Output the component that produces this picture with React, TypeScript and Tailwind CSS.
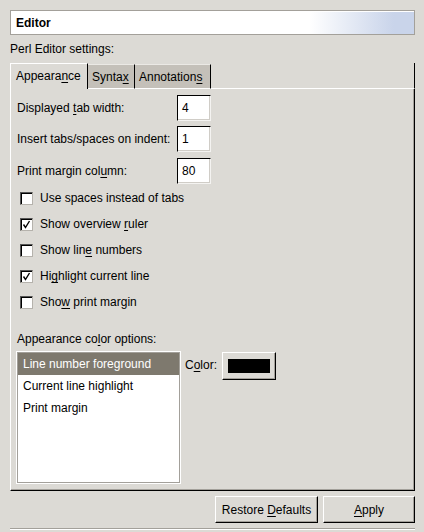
import React from "react";

const U = ({ c }: { c: string }) => <span className="underline underline-offset-2">{c}</span>;

function Check({ checked }: { checked: boolean }) {
  return (
    <div className="w-[13px] h-[13px] bg-white border border-t-[#555] border-l-[#555] border-b-[#b5b2ac] border-r-[#b5b2ac] shadow-[inset_1px_1px_0_#000] flex items-center justify-center shrink-0">
      {checked && (
        <svg width="11" height="11" viewBox="0 0 11 11">
          <path d="M2.5 5.5 L4.5 8.5 L8.5 2" stroke="#000" strokeWidth="1.4" fill="none" />
        </svg>
      )}
    </div>
  );
}

function CheckRow({ checked, children }: { checked: boolean; children: React.ReactNode }) {
  return (
    <div className="h-[26px] flex items-center pl-[3px]">
      <Check checked={checked} />
      <span className="ml-[7px] leading-[14px]">{children}</span>
    </div>
  );
}

function InputRow({ label, value, cls }: { label: React.ReactNode; value: string; cls?: string }) {
  return (
    <div className={"flex items-center h-[26px] " + (cls ?? "")}>
      <div className="w-[160px] leading-[14px]">{label}</div>
      <div className="w-[34px] h-[26px] bg-white border border-t-[#000] border-l-[#000] border-b-[#f4f3f1] border-r-[#f4f3f1] shadow-[inset_-1px_-1px_0_#d0cdc7] flex items-center pl-[4px]">
        {value}
      </div>
    </div>
  );
}

export default function App() {
  return (
    <div className="w-[424px] h-[532px] bg-[#dcdad5] pt-[10px] pl-[10px] pr-[9px] flex flex-col overflow-hidden text-[12px] text-black font-['Liberation_Sans',Arial,sans-serif]">
      {/* header */}
      <div className="h-[25px] border border-[#a3a09a] shadow-[inset_1px_1px_0_#ffffff] bg-[linear-gradient(to_right,#ffffff_74%,#c9d4ea_95%)] flex items-center pl-[5px] font-bold leading-[14px]">
        Editor
      </div>

      <div className="mt-[7px] h-[14px] leading-[14px]">Perl Editor settings:</div>

      {/* tabs */}
      <div className="mt-[7px] flex items-end h-[26px]">
        <div className="w-[78px] h-[26px] border-l border-t border-white border-r border-r-black flex items-center pl-[5px] leading-[14px] pb-[2px]">
          <span>Appeara<U c="n" />ce</span>
        </div>
        <div className="w-[47px] h-[25px] bg-[#c4c0b9] border-t border-t-[#ebe9e5] border-r border-r-black border-b border-b-white flex items-center pl-[4px] leading-[14px]">
          <span>Synta<U c="x" /></span>
        </div>
        <div className="w-[76px] h-[25px] bg-[#c4c0b9] border-t border-t-[#ebe9e5] border-r border-r-black border-b border-b-white flex items-center pl-[4px] leading-[14px]">
          <span>Annotation<U c="s" /></span>
        </div>
        <div className="flex-1 h-full border-b border-white border-r border-r-black" />
      </div>

      {/* panel */}
      <div className="h-[402px] border-l border-white border-r border-r-black border-b border-b-black shadow-[inset_-1px_-1px_0_#a3a09a] pt-[6px] pl-[6px] flex flex-col">
        <InputRow label={<>Displayed <U c="t" />ab width:</>} value="4" />
        <InputRow label="Insert tabs/spaces on indent:" value="1" cls="mt-[5px]" />
        <InputRow label={<>Print margin col<U c="u" />mn:</>} value="80" cls="mt-[6px]" />

        <div className="mt-[1px] flex flex-col">
          <CheckRow checked={false}>Use spaces instead of tabs</CheckRow>
          <CheckRow checked={true}>Show overview <U c="r" />uler</CheckRow>
          <CheckRow checked={false}>Show lin<U c="e" /> numbers</CheckRow>
          <CheckRow checked={true}>Hi<U c="g" />hlight current line</CheckRow>
          <CheckRow checked={false}>Sho<U c="w" /> print margin</CheckRow>
        </div>

        <div className="mt-[17px] h-[14px] leading-[14px]">
          Appearance co<U c="l" />or options:
        </div>

        <div className="mt-[6px] flex items-start">
          <div className="w-[163px] h-[131px] bg-white border border-[#a3a09a] shadow-[0_0_0_1px_#ffffff] flex flex-col">
            <div className="h-[22px] leading-[22px] px-[5px] bg-[#7e796e] text-white">Line number foreground</div>
            <div className="h-[22px] leading-[22px] px-[5px]">Current line highlight</div>
            <div className="h-[22px] leading-[22px] px-[5px]">Print margin</div>
          </div>
          <div className="ml-[5px] h-[22px] leading-[22px] mt-[2px]">
            C<U c="o" />lor:
          </div>
          <div className="ml-[5px] w-[54px] h-[28px] border border-t-white border-l-white border-b-black border-r-black shadow-[inset_-1px_-1px_0_#a3a09a] flex items-center justify-center">
            <div className="w-[42px] h-[14px] bg-black" />
          </div>
        </div>
      </div>

      {/* buttons */}
      <div className="mt-[5px] flex justify-end gap-[5px]">
        <div className="w-[103px] h-[27px] border border-t-white border-l-white border-b-black border-r-black shadow-[inset_-1px_-1px_0_#a3a09a] flex items-center justify-center leading-[14px]">
          <span>Restore <U c="D" />efaults</span>
        </div>
        <div className="w-[92px] h-[27px] border border-t-white border-l-white border-b-black border-r-black shadow-[inset_-1px_-1px_0_#a3a09a] flex items-center justify-center leading-[14px]">
          <span><U c="A" />pply</span>
        </div>
      </div>

      <div className="mt-[5px] border-t border-t-[#a3a09a] border-b border-b-white" />
    </div>
  );
}
